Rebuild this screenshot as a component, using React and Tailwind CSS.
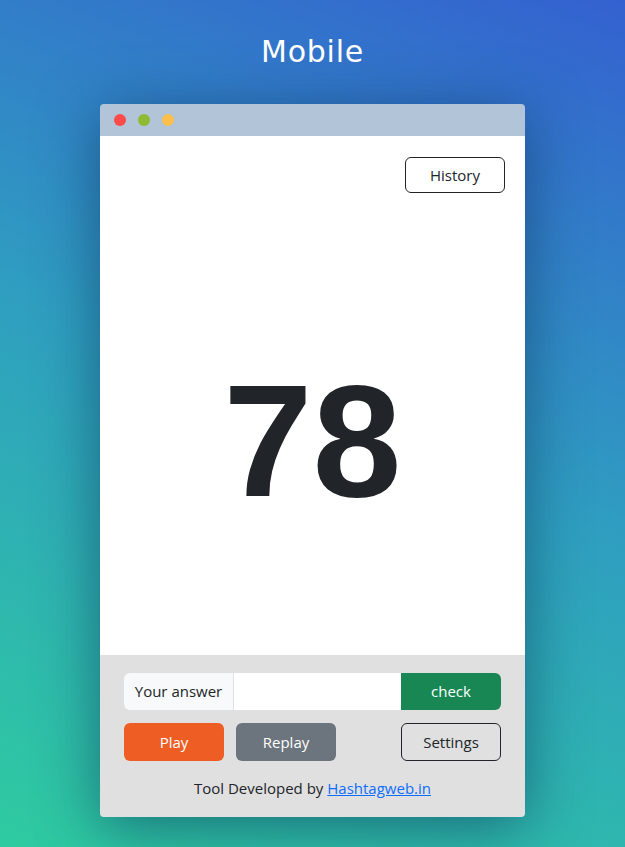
export default function App() {
  return (
    <div className="w-[625px] h-[847px] overflow-hidden bg-[linear-gradient(22deg,#2ecba0_0%,#2f9fc0_50%,#3461d0_100%)] flex flex-col items-center" style={{ fontFamily: '"Open Sans", "Noto Sans", sans-serif' }}>
      <h1 className="mt-[33px] h-[38px] text-white text-[30px] leading-[38px] tracking-wide" style={{ fontFamily: '"DejaVu Sans", sans-serif' }}>Mobile</h1>
      <div className="mt-[33px] w-[425px] rounded-[4px] overflow-hidden shadow-[0_10px_60px_rgba(10,40,80,0.55)] flex flex-col">
        <div className="h-[32px] bg-[#b2c4d8] flex items-center gap-[12px] pl-[14px]">
          <span className="w-[12px] h-[12px] rounded-full bg-[#fe4a4a]"></span>
          <span className="w-[12px] h-[12px] rounded-full bg-[#8dbb33]"></span>
          <span className="w-[12px] h-[12px] rounded-full bg-[#fdbf4c]"></span>
        </div>
        <div className="h-[519px] bg-white flex flex-col">
          <div className="flex justify-end pt-[21px] pr-[20px]">
            <button className="w-[100px] h-[36px] border border-[#212529] rounded-[6px] text-[15px] text-[#212529] flex items-center justify-center">History</button>
          </div>
          <div className="flex-1 flex items-center justify-center pt-[34px]">
            <span className="text-[160px] font-bold text-[#212529] leading-none" style={{ fontFamily: '"Liberation Sans", Arial, sans-serif' }}>78</span>
          </div>
        </div>
        <div className="bg-[#e0e0e0] px-[24px] pt-[18px] pb-[18px] flex flex-col">
          <div className="flex h-[37px]">
            <div className="w-[110px] bg-[#f8f9fa] border-r border-[#dee2e6] rounded-l-[6px] flex items-center justify-center text-[15px] text-[#212529]">Your answer</div>
            <input className="flex-1 bg-white outline-none px-3 min-w-0" />
            <button className="w-[100px] bg-[#198754] text-white rounded-r-[6px] text-[15px]">check</button>
          </div>
          <div className="flex mt-[13px] h-[38px]">
            <button className="w-[100px] bg-[#ee5d24] text-white rounded-[6px] text-[15px]">Play</button>
            <button className="ml-[12px] w-[100px] bg-[#6c757d] text-white rounded-[6px] text-[15px]">Replay</button>
            <button className="ml-auto w-[100px] border border-[#212529] text-[#212529] rounded-[6px] text-[15px]">Settings</button>
          </div>
          <p className="mt-[16px] text-center text-[15px] text-[#212529] leading-[22px]">Tool Developed by <a href="#" className="text-[#0d6efd] underline">Hashtagweb.in</a></p>
        </div>
      </div>
    </div>
  );
}
